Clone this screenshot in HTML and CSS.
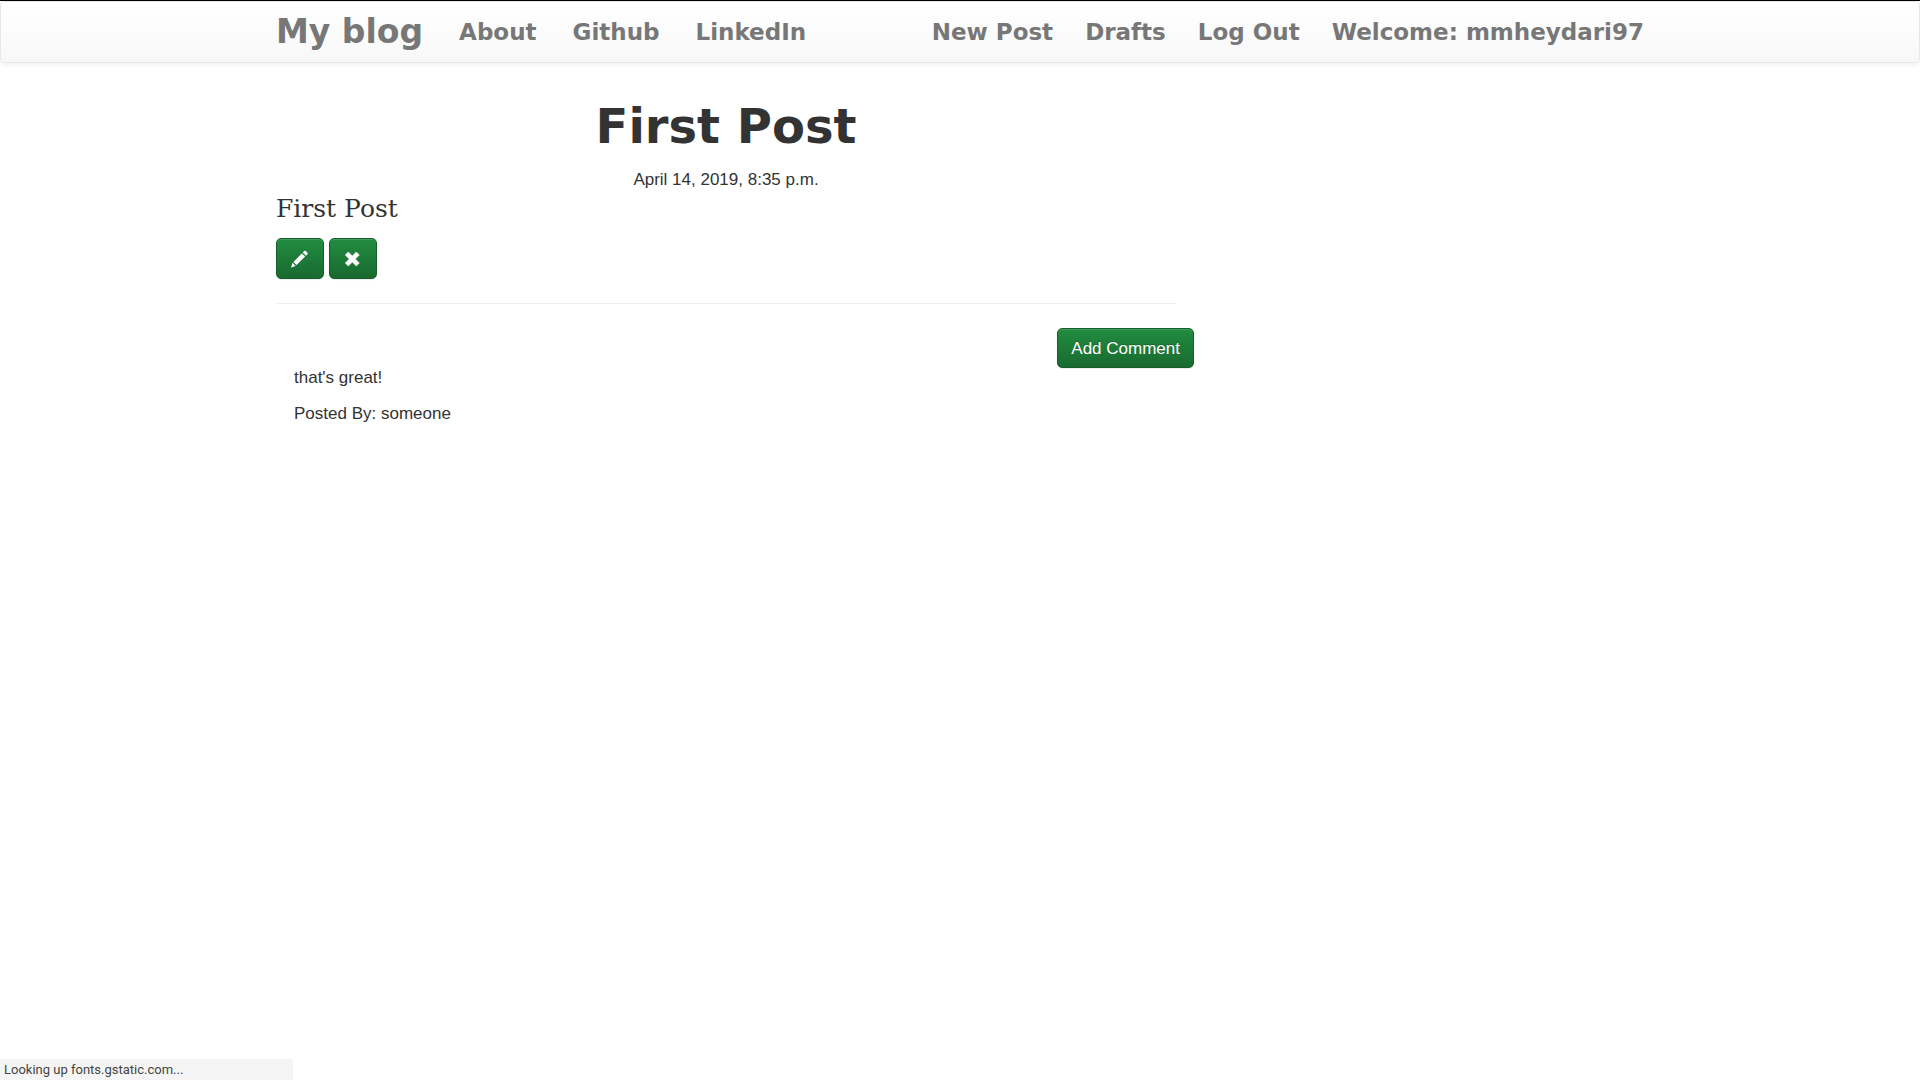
FILE: index.html
```html
<!DOCTYPE html>
<html lang="en">
<head>
<meta charset="utf-8">
<meta name="viewport" content="width=device-width, initial-scale=1">
<title>My blog</title>
<link rel="stylesheet" href="styles.css">
</head>
<body>
<header class="navbar">
  <nav class="container nav-row">
    <a class="brand" href="#">My blog</a>
    <ul class="nav-list">
      <li><a href="#">About</a></li>
      <li><a href="#">Github</a></li>
      <li><a href="#">LinkedIn</a></li>
    </ul>
    <ul class="nav-list nav-right">
      <li><a href="#">New Post</a></li>
      <li><a href="#">Drafts</a></li>
      <li><a href="#">Log Out</a></li>
      <li><a href="#">Welcome: mmheydari97</a></li>
    </ul>
  </nav>
</header>
<main class="container">
  <article class="post">
    <h1 class="post-title">First Post</h1>
    <p class="post-date">April 14, 2019, 8:35 p.m.</p>
    <p class="post-text">First Post</p>
    <div class="post-actions">
      <button class="btn btn-icon" type="button" aria-label="Edit post">
        <svg width="18" height="18" viewBox="0 0 18 18" fill="#fff" aria-hidden="true"><path d="M0 17.500L1.500 12.800L4.700 16Z M2.400 11.900L10.900 3.400L14.100 6.600L5.600 15.100Z M11.800 2.500L13.200 1.100Q14 .400 14.800 1.100L16.400 2.700Q17.100 3.500 16.400 4.300L15 5.700Z"/></svg>
      </button>
      <button class="btn btn-icon" type="button" aria-label="Delete post">
        <svg width="18" height="18" viewBox="0 0 18 18" fill="#fff" aria-hidden="true"><path d="M4.300 2L8.300 6L12.300 2L15.300 5L11.300 9L15.300 13L12.300 16L8.300 12L4.300 16L1.300 13L5.300 9L1.300 5Z" stroke="#fff" stroke-width=".6" stroke-linejoin="round"/></svg>
      </button>
    </div>
    <hr class="divider">
    <section class="comments">
      <div class="comment">
        <p>that's great!</p>
        <p>Posted By: someone</p>
      </div>
      <button class="btn btn-text" type="button">Add Comment</button>
    </section>
  </article>
</main>
<div class="status" role="status">Looking up fonts.gstatic.com...</div>
</body>
</html>
```
FILE: styles.css
```css
* {
  box-sizing: border-box;
}

body {
  margin: 0;
  border-top: 1px solid #000;
  background: #fff;
  color: #333;
  font-family: "Liberation Sans", Arial, sans-serif;
  font-size: 17px;
  line-height: 24px;
}

.container {
  max-width: 1404px;
  margin: 0 auto;
  padding: 0 18px;
}

.navbar {
  border: 1px solid #e7e7e7;
  border-radius: 5px;
  background: linear-gradient(#fff, #f8f8f8);
  box-shadow: 0 1px 6px rgba(0, 0, 0, .08);
}

.nav-row {
  display: flex;
  align-items: center;
  gap: 36px;
  min-height: 60px;
  font-family: "DejaVu Sans", sans-serif;
  font-weight: 700;
}

.nav-row a {
  color: #777;
  text-decoration: none;
  white-space: nowrap;
}

.brand {
  font-size: 33px;
}

.nav-list {
  display: flex;
  gap: 36px;
  margin: 0;
  padding: 0;
  list-style: none;
  font-size: 23px;
}

.nav-right {
  gap: 32px;
  margin-left: auto;
}

.post {
  max-width: 900px;
}

.post-title {
  margin: 35px 0 14px;
  font-family: "DejaVu Sans", sans-serif;
  font-size: 48px;
  font-weight: 700;
  line-height: 56px;
  text-align: center;
}

.post-date {
  margin: 0;
  text-align: center;
}

.post-text {
  margin: 0 0 12px;
  font-family: "DejaVu Serif", serif;
  font-size: 25px;
  line-height: 34px;
}

.post-actions {
  display: flex;
  gap: 5px;
}

.btn {
  height: 41px;
  padding: 0 13px;
  border: 1px solid #155d29;
  border-radius: 5px;
  background: linear-gradient(#218c40, #196a30);
  box-shadow: inset 0 1px 0 rgba(255, 255, 255, .15), 0 1px 1px rgba(0, 0, 0, .08);
  color: #fff;
  font: inherit;
  text-shadow: 0 -1px 0 rgba(0, 0, 0, .2);
  white-space: nowrap;
}

.btn-icon {
  display: grid;
  place-items: center;
  width: 48px;
}

.btn-text {
  height: 40px;
  padding-top: 2px;
}

.divider {
  margin: 24px 0;
  border: 0;
  border-top: 1px solid #eee;
}

.comments {
  display: flex;
  justify-content: space-between;
  align-items: flex-start;
  margin-right: -18px;
}

.comment {
  padding: 38px 18px 0;
}

.comment p {
  margin: 0 0 12px;
}

.status {
  position: fixed;
  left: 0;
  bottom: 0;
  width: 293px;
  padding: 0 4px;
  background: #f5f5f5;
  color: #444;
  font-family: Roboto, sans-serif;
  font-size: 13px;
  line-height: 21px;
}
```
